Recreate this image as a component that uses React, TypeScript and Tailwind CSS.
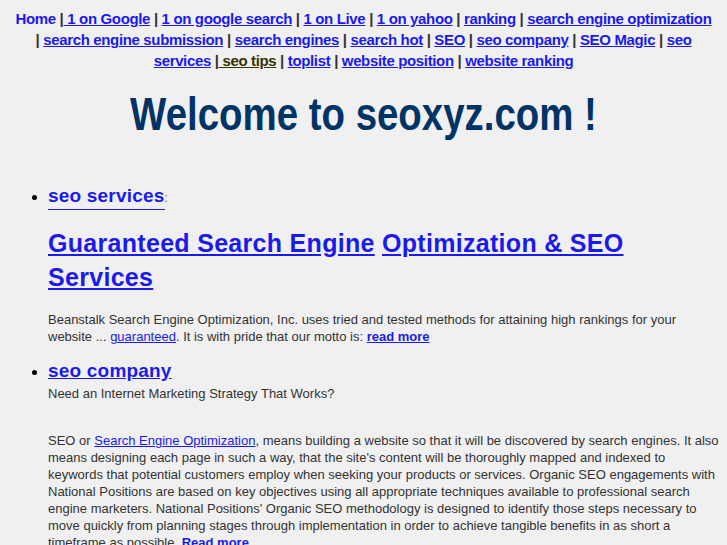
import React from "react";

const L = "text-[#1a1aee] underline";

export default function App() {
  const sep = <span className="text-[#333]"> | </span>;
  return (
    <div className="min-h-[545px] bg-[#f0f0f0] pt-[8px] font-['Liberation_Sans',Arial,sans-serif] text-[#333]">
      <div className="px-[12px] text-center text-[15px] font-bold leading-[21px] tracking-[-0.35px]">
        <span className="text-[#1a1aee]">Home </span>|
        <a className={L}> 1 on Google</a>{sep}
        <a className={L}>1 on google search</a>{sep}
        <a className={L}>1 on Live</a>{sep}
        <a className={L}>1 on yahoo</a>{sep}
        <a className={L}>ranking</a>{sep}
        <a className={L}>search engine optimization</a>{sep}
        <a className={L}>search engine submission</a>{sep}
        <a className={L}>search engines</a>{sep}
        <a className={L}>search hot</a>{sep}
        <a className={L}>SEO</a>{sep}
        <a className={L}>seo company</a>{sep}
        <a className={L}>SEO Magic</a>{sep}
        <a className={L}>seo services</a> |
        <a className="text-[#333300] underline"> seo tips</a>{sep}
        <a className={L}>toplist</a>{sep}
        <a className={L}>website position</a>{sep}
        <a className={L}>website ranking</a>
      </div>

      <h1 className="mt-[19px] text-center text-[46px] font-bold leading-[48px] text-[#003366]">
        <span className="inline-block scale-x-[0.835]">Welcome to seoxyz.com !</span>
      </h1>

      <div className="px-2">
        <ul className="mt-[45px] list-disc pl-10 marker:text-black">
          <li>
            <span className="inline-block border-b border-[#1a1aee] text-[19px] font-bold leading-[26px] tracking-[0.2px] text-[#1a1aee]">
              seo services
            </span>
            <span className="text-[12px] text-[#555]">:</span>
            <h2 className="mt-[16px] text-[25px] font-bold leading-[34px] tracking-[0.3px]">
              <a className={L}>Guaranteed Search Engine</a>{" "}
              <a className={L}>Optimization &amp; SEO Services</a>
            </h2>
            <p className="mt-[17px] text-[13px] leading-[17px]">
              Beanstalk Search Engine Optimization, Inc. uses tried and tested methods for attaining high rankings for your
              website ... <a className="text-[#1a1aee] underline">guaranteed</a>. It is with pride that our motto is:{" "}
              <a className="font-bold text-[#1a1aee] underline">read more</a>
            </p>
          </li>
          <li className="mt-[14px]">
            <a className="text-[19px] font-bold leading-[24px] tracking-[0.2px] text-[#1a1aee] underline">seo company</a>
            <p className="text-[13px] leading-[20px]">Need an Internet Marketing Strategy That Works?</p>
            <p className="mt-[28px] text-[13px] leading-[17px]">
              SEO or <a className="text-[#1a1aee] underline">Search Engine Optimization</a>, means building a website so that it will be discovered by search engines. It also means designing each page in such a way, that the site's content will be thoroughly mapped and indexed to keywords that potential customers employ when seeking your products or services. Organic SEO engagements with National Positions are based on key objectives using all appropriate techniques available to professional search engine marketers. National Positions' Organic SEO methodology is designed to identify those steps necessary to move quickly from planning stages through implementation in order to achieve tangible benefits in as short a timeframe as possible. <a className="font-bold text-[#1a1aee] underline">Read more</a>
            </p>
          </li>
        </ul>
      </div>
    </div>
  );
}
